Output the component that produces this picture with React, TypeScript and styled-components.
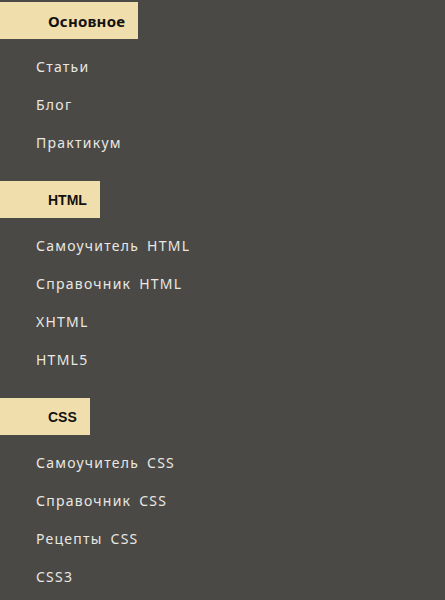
import React from "react";
import styled, { createGlobalStyle } from "styled-components";

const GlobalStyle = createGlobalStyle`
  html, body {
    margin: 0;
    padding: 0;
    background: #4b4945;
  }
  body {
    font-family: "Noto Sans", "Open Sans", "DejaVu Sans", sans-serif;
  }
`;

const Nav = styled.nav`
  display: flex;
  flex-direction: column;
  gap: 20px;
  padding-top: 2px;
  min-height: 600px;
  box-sizing: border-box;
`;

const Section = styled.section`
  display: flex;
  flex-direction: column;
  align-items: flex-start;
`;

/* Latin titles are set in the narrower grotesque, Cyrillic ones in Noto */
const Heading = styled.h3<{ $latin?: boolean }>`
  margin: 0;
  height: 37px;
  display: flex;
  align-items: center;
  padding: 0 13px 0 48px;
  background: #f0dfac;
  color: #141210;
  font-family: ${(p) =>
    p.$latin
      ? `"Liberation Sans", Arial, sans-serif`
      : `"Noto Sans", "Open Sans", sans-serif`};
  font-size: ${(p) => (p.$latin ? "14px" : "15px")};
  font-weight: 700;
  letter-spacing: ${(p) => (p.$latin ? "0" : "0.2px")};
`;

const List = styled.ul`
  list-style: none;
  margin: 8px 0 0;
  padding: 0;
`;

const Item = styled.li`
  height: 38px;
  display: flex;
  align-items: center;
  padding-left: 36px;
`;

const Link = styled.a`
  color: #e9e7e2;
  text-decoration: none;
  font-size: 14px;
  letter-spacing: 1.25px;
  word-spacing: 3px;
`;

const sections = [
  { title: "Основное", latin: false, items: ["Статьи", "Блог", "Практикум"] },
  {
    title: "HTML",
    latin: true,
    items: ["Самоучитель HTML", "Справочник HTML", "XHTML", "HTML5"],
  },
  {
    title: "CSS",
    latin: true,
    items: ["Самоучитель CSS", "Справочник CSS", "Рецепты CSS", "CSS3"],
  },
];

export default function App() {
  return (
    <>
      <GlobalStyle />
      <Nav>
        {sections.map((s) => (
          <Section key={s.title}>
            <Heading $latin={s.latin}>{s.title}</Heading>
            <List>
              {s.items.map((it) => (
                <Item key={it}>
                  <Link href="#">{it}</Link>
                </Item>
              ))}
            </List>
          </Section>
        ))}
      </Nav>
    </>
  );
}
